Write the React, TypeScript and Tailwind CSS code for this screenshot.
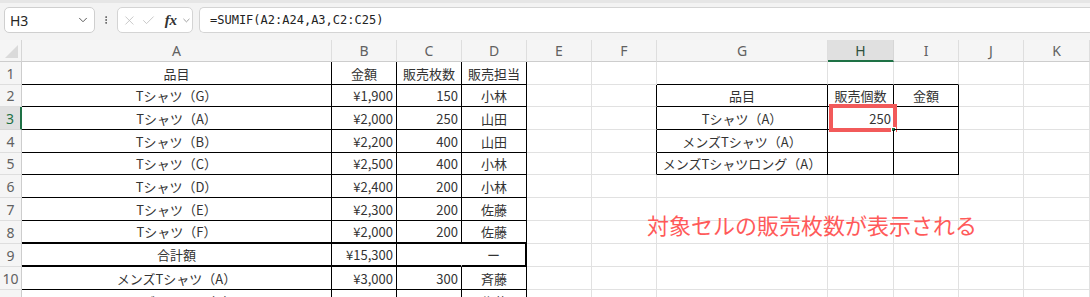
import React from 'react';
import { ChevronDown, EllipsisVertical, X, Check } from 'lucide-react';

type Cell = { text: string; align: 'left' | 'center' | 'right' };

const cols = ['A', 'B', 'C', 'D', 'E', 'F', 'G', 'H', 'I', 'J', 'K'];

// row heights, written out in full so Tailwind sees them
const rowCls = [
  'h-[23px]', 'h-[22px]', 'h-[23px]', 'h-[23px]', 'h-[22px]', 'h-[23px]',
  'h-[23px]', 'h-[23px]', 'h-[23px]', 'h-[23px]', 'h-[23px]',
];

const leftRows: string[][] = [
  ['品目', '金額', '販売枚数', '販売担当'],
  ['Tシャツ（G）', '¥1,900', '150', '小林'],
  ['Tシャツ（A）', '¥2,000', '250', '山田'],
  ['Tシャツ（B）', '¥2,200', '400', '山田'],
  ['Tシャツ（C）', '¥2,500', '400', '小林'],
  ['Tシャツ（D）', '¥2,400', '200', '小林'],
  ['Tシャツ（E）', '¥2,300', '200', '佐藤'],
  ['Tシャツ（F）', '¥2,000', '200', '佐藤'],
  ['合計額', '¥15,300', '', 'ー'],
  ['メンズTシャツ（A）', '¥3,000', '300', '斉藤'],
  ['メンズTシャツ（B）', '¥3,200', '300', '佐藤'],
];

const rightRows: string[][] = [
  ['品目', '販売個数', '金額'],
  ['Tシャツ（A）', '', ''],
  ['メンズTシャツ（A）', '', ''],
  ['メンズTシャツロング（A）', '', ''],
];

function getCell(r: number, c: number): Cell | null {
  // r is 1-based row, c is 0-based column (A = 0)
  if (c <= 3) {
    const t = leftRows[r - 1]?.[c] ?? '';
    if (!t) return null;
    if (r === 1) return { text: t, align: 'center' };
    return { text: t, align: c === 0 || c === 3 ? 'center' : 'right' };
  }
  if (c >= 6 && c <= 8 && r >= 2 && r <= 5) {
    const t = rightRows[r - 2][c - 6];
    if (!t) return null;
    return { text: t, align: 'center' };
  }
  return null;
}

function inLeft(r: number, c: number) {
  return c <= 3 && r >= 1;
}
function inRight(r: number, c: number) {
  return c >= 6 && c <= 8 && r >= 2 && r <= 5;
}

function rightEdge(r: number, c: number) {
  if (r === 9 && c === 3) return 'border-r-2 border-r-black';
  if (r === 9 && c === 2) return 'border-r border-r-transparent';
  if (inLeft(r, c)) return 'border-r border-r-black';
  if (inRight(r, c)) return 'border-r border-r-black';
  if (c === 5 && r >= 2 && r <= 5) return 'border-r border-r-black';
  return 'border-r border-r-[#e1e1e1]';
}

function bottomEdge(r: number, c: number) {
  if (c <= 3 && (r === 8 || r === 9)) return 'border-b-2 border-b-black';
  if (c <= 3 && r <= 10) return 'border-b border-b-black';
  if (c >= 6 && c <= 8 && r >= 1 && r <= 5) return 'border-b border-b-black';
  return 'border-b border-b-[#e1e1e1]';
}

function FormulaBar() {
  return (
    <div className="h-[40px] bg-[#f3f3f3] border-t-[3px] border-t-[#e6e6e6] flex items-start pt-[4px] pl-[4px] gap-[6px]">
      <div className="w-[91px] h-[26px] bg-white border border-[#cfcfcf] rounded-[5px] flex items-center justify-between pl-[5px] pr-[4px]">
        <span className="text-[14px] text-[#262626] font-['Noto_Sans',sans-serif]">H3</span>
        <ChevronDown size={14} strokeWidth={1.6} className="text-[#505050]" />
      </div>
      <div className="w-[10px] h-[26px] flex items-center justify-center">
        <EllipsisVertical size={14} strokeWidth={2.2} className="text-[#505050]" />
      </div>
      <div className="w-[76px] h-[26px] bg-white border border-[#d4d4d4] rounded-[5px] flex items-center pl-[4px] gap-[4px]">
        <X size={15} strokeWidth={1.3} className="text-[#bdbdbd]" />
        <Check size={15} strokeWidth={1.3} className="text-[#bdbdbd]" />
        <span className="ml-[5px] text-[15px] italic font-bold text-[#333] font-['Liberation_Serif',serif] leading-none">fx</span>
        <ChevronDown size={11} strokeWidth={1.6} className="text-[#7a7a7a]" />
      </div>
      <div className="flex-1 h-[26px] bg-white border border-[#d4d4d4] rounded-l-[5px] border-r-0 flex items-center pl-[10px]">
        <span className="text-[12px] text-[#222] font-['DejaVu_Sans_Mono',monospace]">=SUMIF(A2:A24,A3,C2:C25)</span>
      </div>
    </div>
  );
}

export default function App() {
  const rows = Array.from({ length: 11 }, (_, i) => i + 1);

  return (
    <div className="relative w-[1090px] h-[297px] overflow-hidden bg-white font-['Noto_Sans_CJK_JP',sans-serif]">
      <FormulaBar />

      <div className="grid grid-cols-[22px_310px_65px_65px_65px_65px_65px_171px_66px_65px_65px_66px]">
        {/* column header row */}
        <div className="h-[22px] bg-[#f5f5f5] border-r border-r-[#d6d6d6] border-b border-b-[#cdcdcd] relative">
          <div className="absolute right-[3px] bottom-[3px] w-0 h-0 border-l-[13px] border-l-transparent border-b-[13px] border-b-[#dadada]" />
        </div>
        {cols.map((c) => (
          <div
            key={c}
            className={
              c === 'H'
                ? 'h-[22px] bg-[#e0e0e0] border-r border-r-[#d6d6d6] border-b-2 border-b-[#1e7145] flex items-center justify-center text-[14px] text-[#2d4f3c] font-["Noto_Sans",sans-serif]'
                : 'h-[22px] bg-[#f5f5f5] border-r border-r-[#dedede] border-b border-b-[#cdcdcd] flex items-center justify-center text-[14px] text-[#616161] font-["Noto_Sans",sans-serif]'
            }
          >
            {c}
          </div>
        ))}

        {rows.map((r) => (
          <React.Fragment key={r}>
            <div
              className={
                r === 3
                  ? `${rowCls[r - 1]} bg-[#e0e0e0] border-r-2 border-r-[#1e7145] border-b border-b-[#d6d6d6] flex items-center justify-center text-[14px] text-[#1e7145] font-["Noto_Sans",sans-serif]`
                  : `${rowCls[r - 1]} bg-[#f5f5f5] border-r border-r-[#cdcdcd] border-b border-b-[#dedede] flex items-center justify-center text-[14px] text-[#616161] font-["Noto_Sans",sans-serif]`
              }
            >
              {r}
            </div>
            {cols.map((_, c) => {
              const cell = getCell(r, c);
              const isH3 = r === 3 && c === 7;
              return (
                <div
                  key={c}
                  className={`${rowCls[r - 1]} relative ${rightEdge(r, c)} ${bottomEdge(r, c)} flex items-center px-[3px] text-[13px] text-[#333] leading-none whitespace-nowrap ${
                    cell?.align === 'right' ? 'justify-end' : cell?.align === 'center' ? 'justify-center' : 'justify-start'
                  }`}
                >
                  {cell && <span>{cell.text}</span>}
                  {isH3 && (
                    <>
                      <div className="absolute top-[-3px] left-[1px] w-[68px] h-[28px] border-4 border-[#f25a5a] bg-white flex items-center justify-end pr-[2px]">
                        <span>250</span>
                      </div>
                      <div className="absolute right-[-3px] bottom-[-3px] w-[5px] h-[5px] bg-[#1e7145] border border-white" />
                    </>
                  )}
                </div>
              );
            })}
          </React.Fragment>
        ))}
      </div>

      {/* floating note */}
      <div className="absolute left-[647px] top-[213px] text-[22px] leading-none text-[#ff5a5a] whitespace-nowrap">
        対象セルの販売枚数が表示される
      </div>
    </div>
  );
}
